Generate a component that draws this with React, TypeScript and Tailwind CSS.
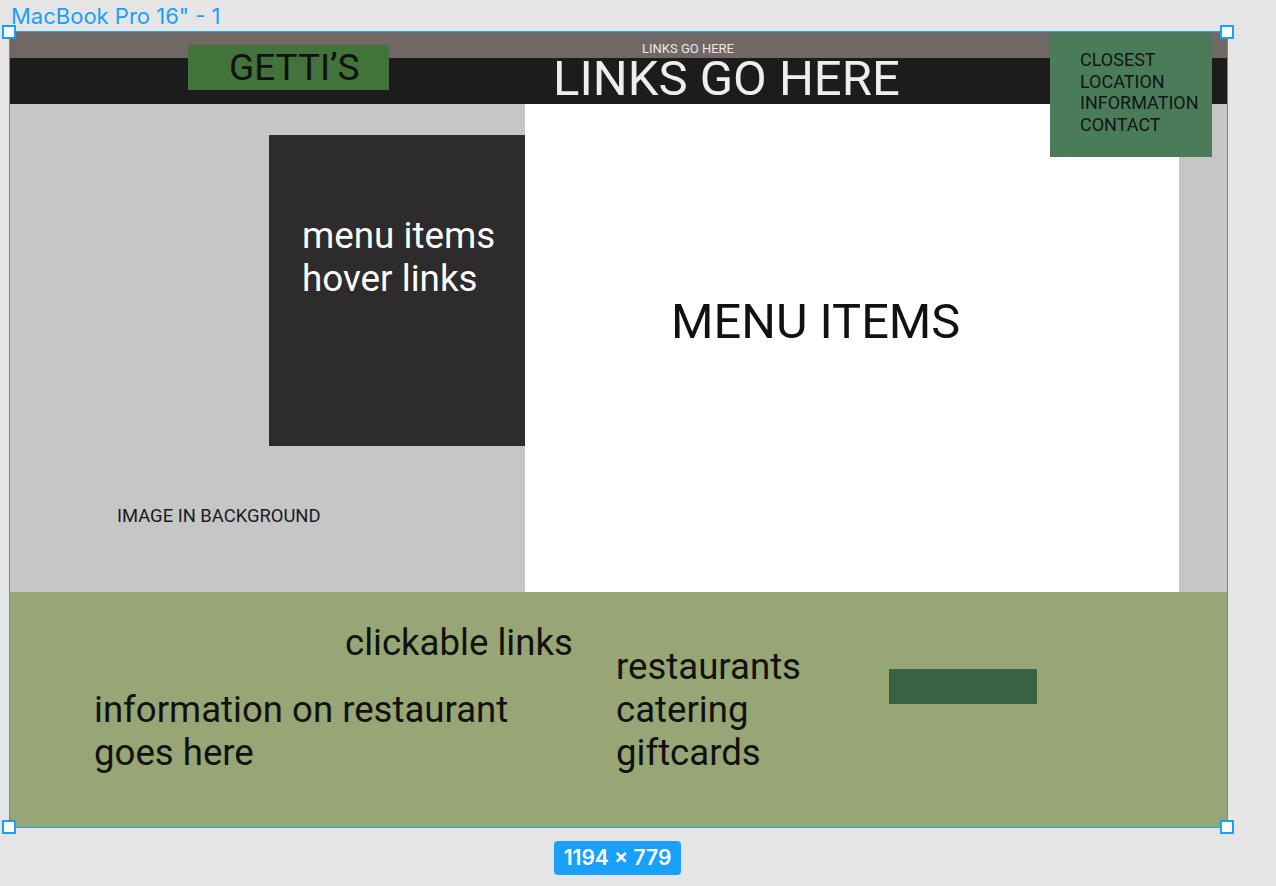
import React from "react";

const handles = [
  "left-[2px] top-[25px]",
  "left-[1220px] top-[25px]",
  "left-[2px] top-[820px]",
  "left-[1220px] top-[820px]",
];

export default function App() {
  return (
    <div className="relative w-[1276px] h-[886px] overflow-hidden bg-[#e5e5e5] font-['Roboto',sans-serif]">
      {/* figma frame label */}
      <div className="absolute left-[11px] top-[3px] text-[22px] leading-[26px] text-[#18a0fb] font-['Inter',sans-serif]">
        MacBook Pro 16" - 1
      </div>

      <Frame />

      {handles.map((h) => (
        <div key={h} className={`absolute ${h} w-[14px] h-[14px] bg-white border-2 border-[#18a0fb]`} />
      ))}

      {/* size badge */}
      <div className="absolute left-[554px] top-[841px] w-[127px] h-[34px] rounded-[4px] bg-[#18a0fb] flex items-center justify-center text-white text-[21px] font-semibold font-['Inter',sans-serif]">
        1194 × 779
      </div>
    </div>
  );
}

function Frame() {
  return (
    <div className="absolute left-[9px] top-[31px] w-[1219px] h-[797px] bg-[#18a0fb] p-px">
      <div className="w-full h-full flex flex-col">
        {/* Header */}
        <div className="relative">
          <div className="h-[26px] bg-[#716866] pl-[632px] pt-[10px]">
            <div className="text-[13px] leading-[13px] text-[#ece8e8]">LINKS GO HERE</div>
          </div>
          <div className="h-[46px] bg-[#1c1c1c] pl-[543px]">
            <div className="text-[49px] leading-[42px] text-[#f1eded]">LINKS GO HERE</div>
          </div>

          <div className="absolute left-[178px] top-[13px] w-[201px] h-[45px] bg-[#41733a] flex items-center pl-[41px]">
            <span className="text-[37px] leading-none text-[#111]">GETTI’S</span>
          </div>

          <div className="absolute left-[1040px] top-px w-[162px] h-[124px] bg-[#4b7c5a] z-10 pl-[30px] pt-[16px] text-[18px] leading-[21.5px] text-[#141414]">
            <div>CLOSEST</div>
            <div>LOCATION</div>
            <div>INFORMATION</div>
            <div>CONTACT</div>
          </div>
        </div>

        {/* Body */}
        <div className="h-[488px] flex bg-[#c6c6c6]">
          <div className="w-[515px] flex flex-col">
            <div className="ml-[259px] mt-[31px] w-[256px] h-[311px] bg-[#2d2b2c] pl-[33px] pt-[79px] text-[36.8px] leading-[43px] text-white">
              <div>menu items</div>
              <div>hover links</div>
            </div>
            <div className="ml-[107px] mt-[59px] text-[18.4px] leading-[21px] text-[#1a1a1a]">IMAGE IN BACKGROUND</div>
          </div>
          <div className="w-[654px] bg-white pl-[146px] pt-[191px]">
            <div className="text-[48.7px] leading-[54px] text-[#111]">MENU ITEMS</div>
          </div>
          <div className="flex-1" />
        </div>

        {/* Footer */}
        <div className="flex-1 bg-[#97a674] flex pl-[84px] text-[36.6px] leading-[43px] text-[#111]">
          <div className="w-[522px] pt-[29px]">
            <div className="ml-[251px]">clickable links</div>
            <div className="mt-[24px]">
              <div>information on restaurant</div>
              <div>goes here</div>
            </div>
          </div>
          <div className="w-[273px] pt-[53px]">
            <div>restaurants</div>
            <div>catering</div>
            <div>giftcards</div>
          </div>
          <div className="mt-[77px] w-[148px] h-[35px] bg-[#376244]" />
        </div>
      </div>
    </div>
  );
}
